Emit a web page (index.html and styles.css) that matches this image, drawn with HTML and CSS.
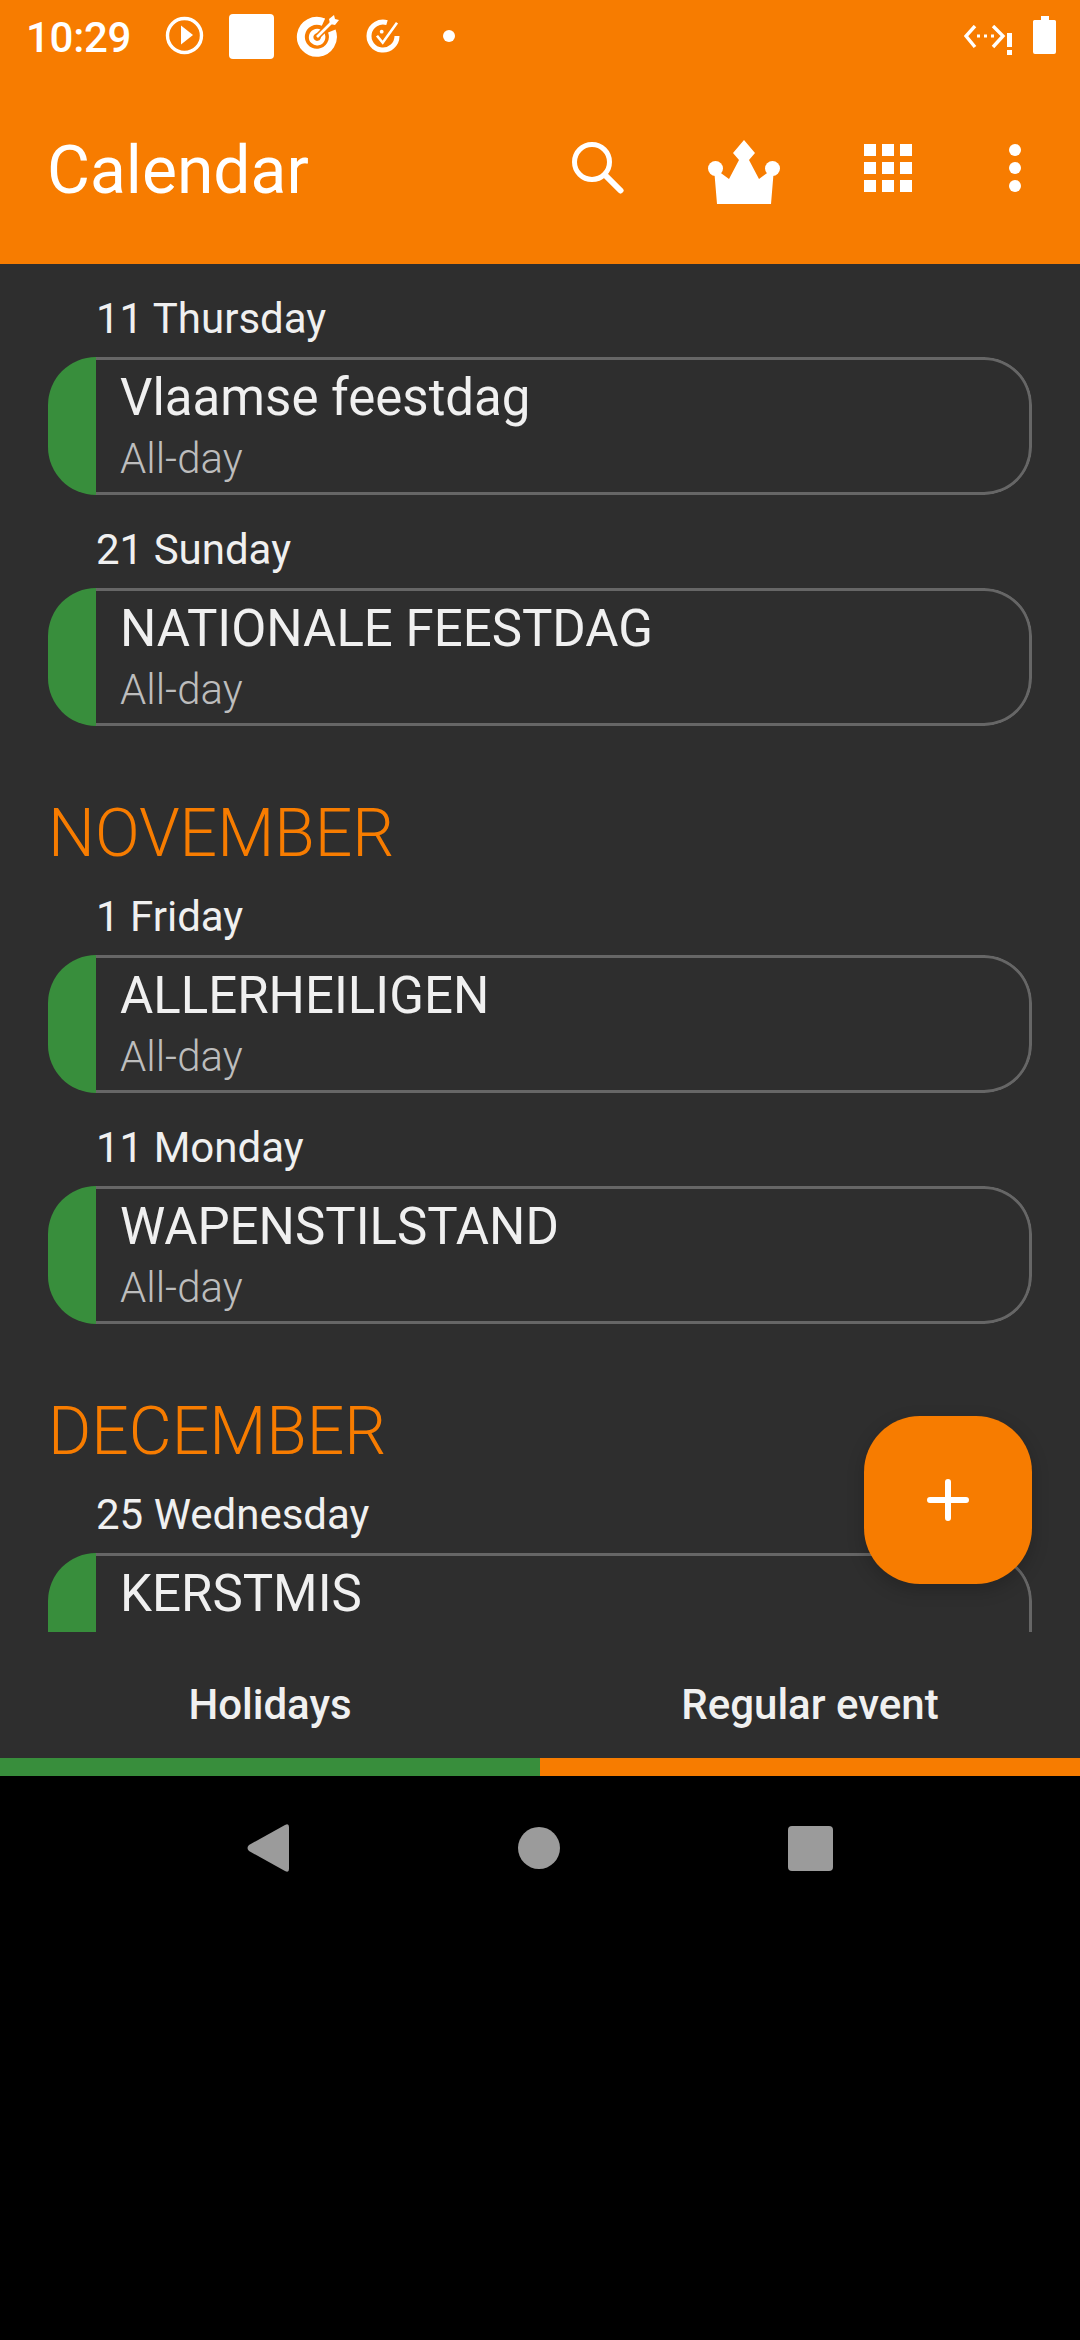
FILE: index.html
```html
<!DOCTYPE html>
<html lang="en">
<head>
    <title>Calendar</title>
    <link rel="stylesheet" href="styles.css">
</head>
<body>
    <div class="screen">
        <div class="header">
            <div class="status-bar">
                <span class="clock">10:29</span>
                <svg class="status-icon play" viewBox="0 0 40 40"><circle cx="19.500" cy="19.500" r="17" fill="none" stroke="#fff" stroke-width="3.400"/><path d="M16 9.500 L28 19 L16 28.500 Z" fill="#fff"/></svg>
                <div class="status-square"></div>
                <svg class="status-icon target" viewBox="0 0 44 44"><path d="M27.500 8.200 A16 16 0 1 0 35.800 17" fill="none" stroke="#fff" stroke-width="8"/><path d="M24 17.900 A6 6 0 1 0 26.200 20" fill="none" stroke="#fff" stroke-width="4.500"/><path d="M21 23 L37 7" stroke="#f77c00" stroke-width="6"/><path d="M21 23 L37 7" stroke="#fff" stroke-width="2.600"/><path d="M33 5 L38 1 L39 5 L43 6 L39 11 L34 10 Z" fill="#fff"/></svg>
                <svg class="status-icon check" viewBox="0 0 36 36"><path d="M22 4.600 A14 14 0 1 0 32 18" fill="none" stroke="#fff" stroke-width="5"/><path d="M12 17.700 L17.700 24.700 L32 4.700" fill="none" stroke="#fff" stroke-width="2.600"/><circle cx="16.700" cy="13.700" r="1.900" fill="#fff"/></svg>
                <div class="status-dot"></div>
                <div class="status-spacer"></div>
                <svg class="status-icon code" viewBox="0 0 50 32"><path d="M11 1 L2 11 L11 22 M29 1 L39 11 L29 22" fill="none" stroke="#fff" stroke-width="3.400"/><path d="M13 9.500 h3 v3 h-3 z M20 9.500 h3 v3 h-3 z M27 9.500 h3 v3 h-3 z" fill="#fff"/><path d="M43 8 h5 v14 h-5 z M43 25 h5 v5 h-5 z" fill="#fff"/></svg>
                <svg class="status-icon battery" viewBox="0 0 23 38"><path d="M8 0 H16 V4 H21.500 Q23 4 23 5.500 V36 Q23 38 21 38 H2 Q0 38 0 36 V5.500 Q0 4 1.500 4 H8 Z" fill="#fff"/></svg>
            </div>
            <div class="app-bar">
                <h1 class="app-title">Calendar</h1>
                <svg class="bar-icon search" viewBox="0 0 52 52"><circle cx="20" cy="20" r="17.500" fill="none" stroke="#fff" stroke-width="5"/><path d="M33.500 33.500 L48.500 48.500" stroke="#fff" stroke-width="6" stroke-linecap="round"/></svg>
                <svg class="bar-icon crown" viewBox="0 0 72 64"><path d="M36 0 L47 13 L41 20 L51 39 L66 28 L63 64 H9 L6 28 L21 39 L31 20 L25 13 Z" fill="#fff"/><circle cx="7.500" cy="28.500" r="7.500" fill="#fff"/><circle cx="64.500" cy="28.500" r="7.500" fill="#fff"/></svg>
                <div class="grid-icon">
                    <i></i><i></i><i></i>
                    <i></i><i></i><i></i>
                    <i></i><i></i><i></i>
                </div>
                <div class="more-icon"><i></i><i></i><i></i></div>
            </div>
        </div>

        <div class="event-list">
            <div class="date-label">11 Thursday</div>
            <div class="event-card">
                <div class="event-stripe"></div>
                <div class="event-body">
                    <div class="event-title">Vlaamse feestdag</div>
                    <div class="event-time">All-day</div>
                </div>
            </div>
            <div class="date-label">21 Sunday</div>
            <div class="event-card">
                <div class="event-stripe"></div>
                <div class="event-body">
                    <div class="event-title">NATIONALE FEESTDAG</div>
                    <div class="event-time">All-day</div>
                </div>
            </div>

            <div class="month-label">NOVEMBER</div>
            <div class="date-label">1 Friday</div>
            <div class="event-card">
                <div class="event-stripe"></div>
                <div class="event-body">
                    <div class="event-title">ALLERHEILIGEN</div>
                    <div class="event-time">All-day</div>
                </div>
            </div>
            <div class="date-label">11 Monday</div>
            <div class="event-card">
                <div class="event-stripe"></div>
                <div class="event-body">
                    <div class="event-title">WAPENSTILSTAND</div>
                    <div class="event-time">All-day</div>
                </div>
            </div>

            <div class="month-label">DECEMBER</div>
            <div class="date-label">25 Wednesday</div>
            <div class="event-card">
                <div class="event-stripe"></div>
                <div class="event-body">
                    <div class="event-title">KERSTMIS</div>
                </div>
            </div>
        </div>

        <button class="fab"><svg viewBox="0 0 42 42"><path d="M21 3 V39 M3 21 H39" stroke="#fff" stroke-width="6" stroke-linecap="round"/></svg></button>

        <div class="tabs">
            <div class="tab tab-green">Holidays</div>
            <div class="tab tab-orange">Regular event</div>
        </div>

        <div class="nav-bar">
            <svg class="nav-icon" viewBox="0 0 43 48"><path d="M39 1 Q43 -1 43 3 V45 Q43 49 39 47 L3 27 Q0 24 3 21 Z" fill="#9b9b9b"/></svg>
            <div class="nav-home"></div>
            <div class="nav-recent"></div>
        </div>
    </div>
</body>
</html>
```

FILE: styles.css
```css
* {
    box-sizing: border-box;
}

body {
    margin: 0;
    background-color: #000;
    font-family: Roboto, sans-serif;
}

.screen {
    position: relative;
    width: 1080px;
    height: 2340px;
    background-color: #000;
}

/* header */
.header {
    height: 264px;
    background-color: #f77c00;
    color: #fff;
}

.status-bar {
    display: flex;
    align-items: center;
    height: 72px;
    padding: 0 24px 0 26px;
}

.clock {
    flex: none;
    width: 99px;
    margin-top: 2px;
    font-size: 42px;
    font-weight: 500;
    letter-spacing: -0.3px;
    white-space: nowrap;
}

.status-icon {
    display: block;
    flex: none;
}

.play {
    width: 40px;
    height: 40px;
    margin-left: 40px;
}

.status-square {
    width: 45px;
    height: 45px;
    margin-left: 24px;
    background-color: #fff;
    border-radius: 4px;
}

.target {
    width: 44px;
    height: 44px;
    margin-left: 22px;
}

.check {
    width: 36px;
    height: 36px;
    margin-left: 25px;
}

.status-dot {
    width: 12px;
    height: 12px;
    margin-left: 42px;
    background-color: #fff;
    border-radius: 50%;
}

.status-spacer {
    flex: 1;
}

.code {
    width: 50px;
    height: 32px;
    margin-top: 10px;
}

.battery {
    width: 23px;
    height: 38px;
    margin-left: 19px;
    margin-bottom: 2px;
}

.app-bar {
    display: flex;
    align-items: center;
    height: 192px;
    padding-left: 47px;
}

.app-title {
    flex: 1;
    margin: 5px 0 0;
    font-size: 66px;
    font-weight: 400;
}

.bar-icon {
    display: block;
    flex: none;
}

.search {
    width: 52px;
    height: 52px;
    margin-right: 84px;
}

.crown {
    width: 72px;
    height: 64px;
    margin-top: 8px;
    margin-right: 84px;
}

.grid-icon {
    display: grid;
    grid-template-columns: repeat(3, 12px);
    grid-auto-rows: 12px;
    gap: 6px;
    margin-right: 97px;
}

.grid-icon i {
    background-color: #fff;
}

.more-icon {
    display: flex;
    flex-direction: column;
    gap: 6px;
    margin-right: 59px;
}

.more-icon i {
    width: 12px;
    height: 12px;
    background-color: #fff;
    border-radius: 50%;
}

/* events */
.event-list {
    height: 1368px;
    padding: 0 48px;
    overflow: hidden;
    background-color: #2e2e2e;
    color: #f0f0f0;
}

.date-label {
    height: 93px;
    padding: 27px 0 0 48px;
    font-size: 42px;
    line-height: 56px;
}

.month-label {
    height: 136px;
    padding-top: 72px;
    color: #f77c00;
    font-size: 66px;
    font-weight: 300;
    line-height: 72px;
}

.event-card {
    display: flex;
    height: 138px;
    overflow: hidden;
    border-radius: 48px;
}

.event-stripe {
    flex: none;
    width: 48px;
    background-color: #388e3c;
}

.event-body {
    flex: 1;
    padding: 10px 0 0 24px;
    border: 3px solid #666;
    border-left: none;
    border-radius: 0 48px 48px 0;
}

.event-title {
    font-size: 51px;
    line-height: 56px;
}

.event-time {
    margin-top: 7px;
    color: #bdbdbd;
    font-size: 42px;
    font-weight: 300;
    line-height: 52px;
}

/* floating button */
.fab {
    position: absolute;
    top: 1416px;
    left: 864px;
    display: flex;
    align-items: center;
    justify-content: center;
    width: 168px;
    height: 168px;
    padding: 0;
    border: none;
    border-radius: 56px;
    background-color: #f77c00;
    box-shadow: 0 6px 18px rgba(0, 0, 0, 0.2);
}

.fab svg {
    width: 42px;
    height: 42px;
}

/* tabs */
.tabs {
    display: flex;
    height: 144px;
    background-color: #2e2e2e;
}

.tab {
    flex: 1;
    height: 144px;
    padding-top: 50px;
    color: #f0f0f0;
    font-size: 42px;
    font-weight: 500;
    line-height: 46px;
    text-align: center;
}

.tab-green {
    border-bottom: 18px solid #388e3c;
}

.tab-orange {
    border-bottom: 18px solid #f77c00;
}

/* system nav */
.nav-bar {
    display: flex;
    align-items: center;
    justify-content: space-between;
    height: 144px;
    padding: 0 247px 0 246px;
}

.nav-icon {
    display: block;
    width: 43px;
    height: 48px;
}

.nav-home {
    width: 42px;
    height: 42px;
    background-color: #9b9b9b;
    border-radius: 50%;
}

.nav-recent {
    width: 45px;
    height: 45px;
    background-color: #9b9b9b;
    border-radius: 4px;
}
```
